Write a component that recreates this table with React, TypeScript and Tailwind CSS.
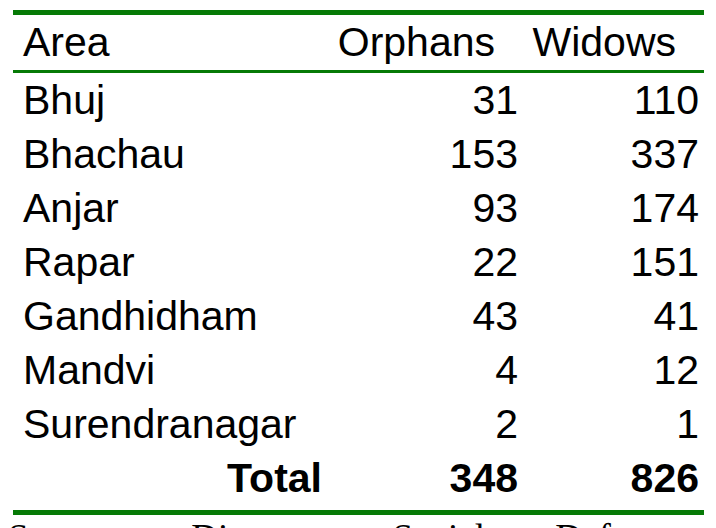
const rows = [
  { area: 'Bhuj', orphans: 31, widows: 110 },
  { area: 'Bhachau', orphans: 153, widows: 337 },
  { area: 'Anjar', orphans: 93, widows: 174 },
  { area: 'Rapar', orphans: 22, widows: 151 },
  { area: 'Gandhidham', orphans: 43, widows: 41 },
  { area: 'Mandvi', orphans: 4, widows: 12 },
  { area: 'Surendranagar', orphans: 2, widows: 1 },
];

const total = rows.reduce(
  (acc, r) => ({ orphans: acc.orphans + r.orphans, widows: acc.widows + r.widows }),
  { orphans: 0, widows: 0 },
);

export default function App() {
  return (
    <div className="h-[528px] w-[716px] overflow-hidden bg-white pt-[10px] text-black">
      <div className="ml-[13px] w-[691px] font-['Liberation_Sans',Arial,sans-serif] text-[41px]">
        <div className="grid grid-cols-[309px_196px_181px] border-t-[5px] border-b-[3px] border-[#067a06] leading-[55px]">
          <div className="pl-[10px]">Area</div>
          <div className="pr-[23px] text-right">Orphans</div>
          <div className="pr-[23px] text-right">Widows</div>
        </div>

        <div className="border-b-[5px] border-[#067a06] pb-[5px]">
          {rows.map((r) => (
            <div key={r.area} className="grid grid-cols-[309px_196px_181px] leading-[54px]">
              <div className="pl-[10px]">{r.area}</div>
              <div className="text-right">{r.orphans}</div>
              <div className="text-right">{r.widows}</div>
            </div>
          ))}
          <div className="grid grid-cols-[309px_196px_181px] font-bold leading-[54px]">
            <div className="text-right">Total</div>
            <div className="text-right">{total.orphans}</div>
            <div className="text-right">{total.widows}</div>
          </div>
        </div>
      </div>

      {/* source line, cut off by the bottom edge as in the original */}
      <p className="ml-[8px] mt-[4px] whitespace-nowrap font-['Liberation_Serif','Times_New_Roman',serif] text-[37px] leading-none [word-spacing:61px]">
        Source: Director, Social Defence, Government of Gujarat
      </p>
    </div>
  );
}
